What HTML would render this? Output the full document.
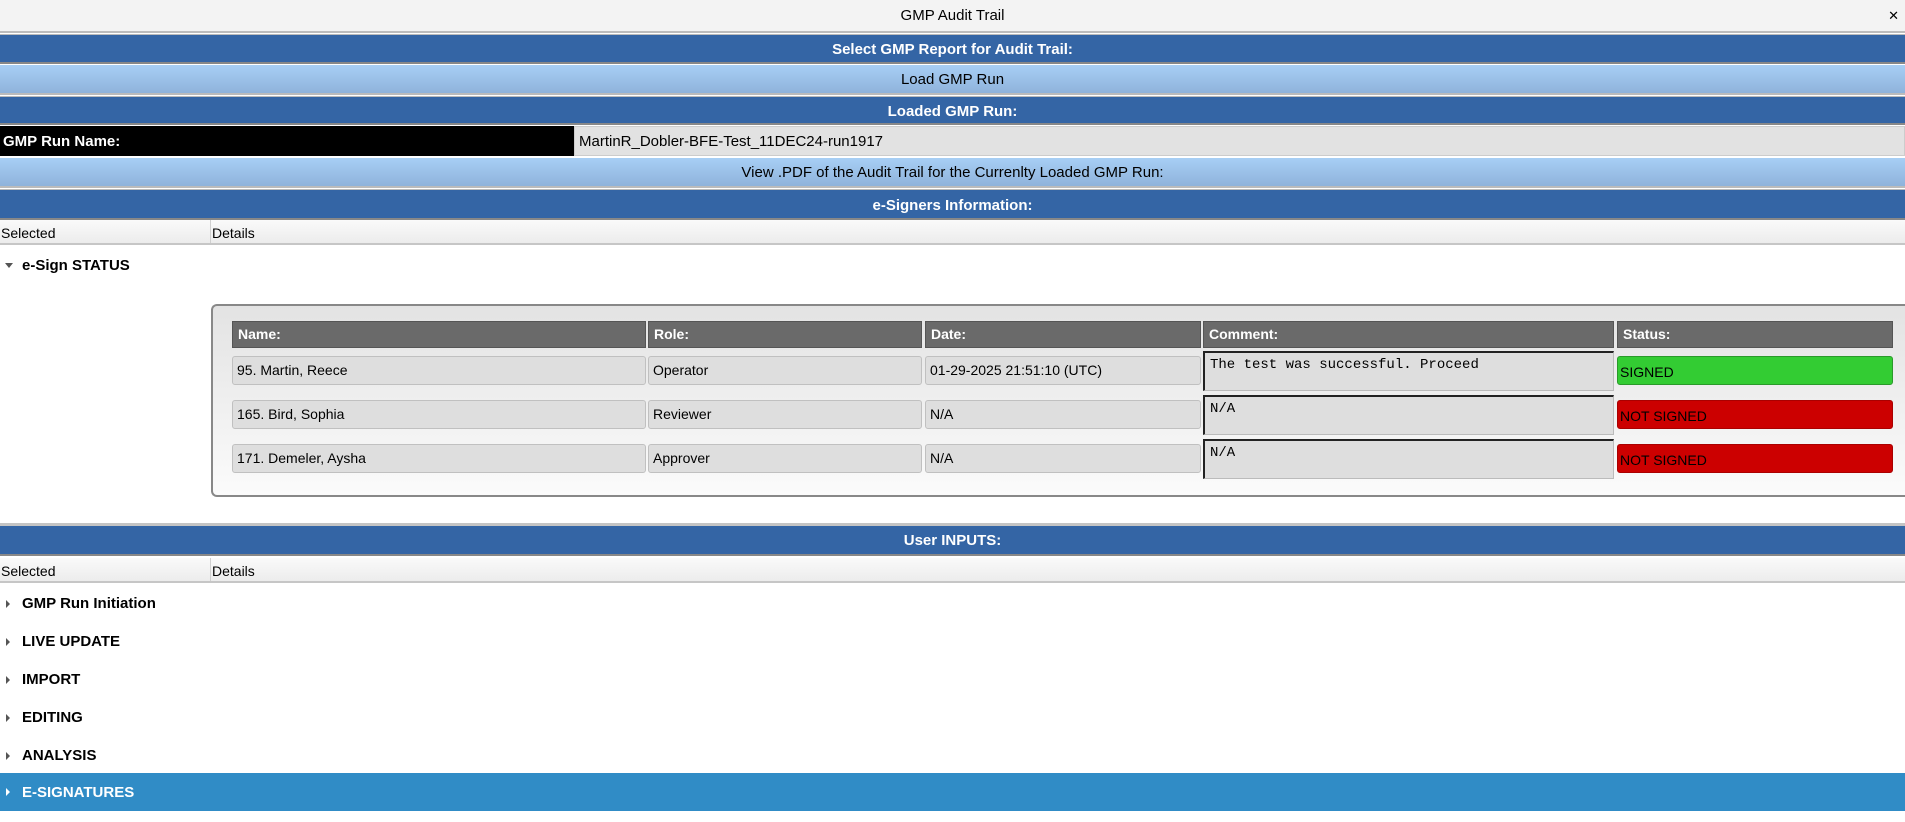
<!DOCTYPE html>
<html><head><meta charset="utf-8"><style>
*{box-sizing:border-box;margin:0;padding:0}
body{width:1905px;height:822px;overflow:hidden;background:#fff;font-family:"Liberation Sans","DejaVu Sans",sans-serif;font-size:15px;color:#000;position:relative}
.a{position:absolute}
.title{left:0;top:0;width:1905px;height:33px;background:#f3f3f3;border-bottom:2px solid #bcbcbc;text-align:center;line-height:31px;font-size:15px}
.close{right:6px;top:0;line-height:31px;font-size:13px}
.band{left:0;width:1905px;background:#3465a5;color:#fff;font-weight:bold;text-align:center;border-bottom:2px solid #888;border-top:1px solid #bbb}
.lb{left:0;width:1905px;background:linear-gradient(#a7cff5,#8fb3db);color:#000;text-align:center;border-bottom:2px solid #bbb}
.hdr{left:0;width:1905px;background:linear-gradient(#fafafa,#ececec);border-bottom:2px solid #c6c6c6;font-size:14px}
.hdr span{position:absolute;top:5px}
.hdr i{position:absolute;left:210px;top:0;bottom:0;border-left:1px solid #d0d0d0}
.row{left:0;width:1905px;font-weight:bold;font-size:15px}
.tri{position:absolute;left:6px;width:0;height:0;border-top:4px solid transparent;border-bottom:4px solid transparent;border-left:4px solid #555}
.th{background:#6a6a6a;color:#fff;font-weight:bold;border:1px solid #555;padding-left:5px;line-height:25px;top:321px;height:27px;font-size:14px}
.cell{background:#dedede;border:1px solid #c0c0c0;border-radius:3px;padding-left:4px;font-size:14px;line-height:27px;height:29px}
.cm{background:#dedede;border:1px solid #bbb;border-top:2px solid #222;border-left:2px solid #222;font-family:"Liberation Mono","DejaVu Sans Mono",monospace;font-size:14px;padding:4px 5px;height:40px}
.st{border-radius:3px;font-size:14px;line-height:30px;height:29px;padding-left:2px}
</style></head><body>
<div class="a title">GMP Audit Trail</div>
<div class="a close">✕</div>
<div class="a band" style="top:34px;height:30px;line-height:30px">Select GMP Report for Audit Trail:</div>
<div class="a lb" style="top:65px;height:30px;line-height:30px">Load GMP Run</div>
<div class="a band" style="top:96px;height:29px;line-height:29px">Loaded GMP Run:</div>
<div class="a" style="left:0;top:126px;width:574px;height:30px;background:#000;color:#fff;font-weight:bold;line-height:31px;padding-left:3px">GMP Run Name:</div>
<div class="a" style="left:574px;top:126px;width:1331px;height:30px;background:#e2e2e2;border:1px solid #ccc;line-height:29px;padding-left:4px">MartinR_Dobler-BFE-Test_11DEC24-run1917</div>
<div class="a lb" style="top:158px;height:30px;line-height:30px">View .PDF of the Audit Trail for the Currenlty Loaded GMP Run:</div>
<div class="a band" style="top:189px;height:31px;line-height:31px">e-Signers Information:</div>
<div class="a hdr" style="top:220px;height:25px"><span style="left:1px">Selected</span><i></i><span style="left:212px">Details</span></div>
<div class="a row" style="top:257px;height:20px"><div class="tri" style="top:6px;border:4px solid transparent;border-top:5px solid #555;border-bottom:0;left:5px"></div><span style="position:absolute;left:22px">e-Sign STATUS</span></div>
<div class="a" style="left:211px;top:304px;width:1700px;height:193px;border:2px solid #888;border-right:none;border-radius:6px 0 0 6px;background:linear-gradient(#e3e3e3,#fbfbfb)"></div>
<div class="a th" style="left:232px;width:414px">Name:</div>
<div class="a th" style="left:648px;width:274px">Role:</div>
<div class="a th" style="left:925px;width:276px">Date:</div>
<div class="a th" style="left:1203px;width:411px">Comment:</div>
<div class="a th" style="left:1617px;width:276px">Status:</div>

<div class="a cell" style="left:232px;top:356px;width:414px">95. Martin, Reece</div>
<div class="a cell" style="left:648px;top:356px;width:274px">Operator</div>
<div class="a cell" style="left:925px;top:356px;width:276px">01-29-2025 21:51:10 (UTC)</div>
<div class="a cm" style="left:1203px;top:351px;width:411px">The test was successful. Proceed</div>
<div class="a st" style="left:1617px;top:356px;width:276px;background:#33cc33;border:1px solid #2a9a2a">SIGNED</div>

<div class="a cell" style="left:232px;top:400px;width:414px">165. Bird, Sophia</div>
<div class="a cell" style="left:648px;top:400px;width:274px">Reviewer</div>
<div class="a cell" style="left:925px;top:400px;width:276px">N/A</div>
<div class="a cm" style="left:1203px;top:395px;width:411px">N/A</div>
<div class="a st" style="left:1617px;top:400px;width:276px;background:#cc0000;border:1px solid #a00">NOT SIGNED</div>

<div class="a cell" style="left:232px;top:444px;width:414px">171. Demeler, Aysha</div>
<div class="a cell" style="left:648px;top:444px;width:274px">Approver</div>
<div class="a cell" style="left:925px;top:444px;width:276px">N/A</div>
<div class="a cm" style="left:1203px;top:439px;width:411px">N/A</div>
<div class="a st" style="left:1617px;top:444px;width:276px;background:#cc0000;border:1px solid #a00">NOT SIGNED</div>

<div class="a" style="left:0;top:523px;width:1905px;height:3px;background:#c4c4c4"></div>
<div class="a band" style="top:526px;height:30px;line-height:30px;border-top:none">User INPUTS:</div>
<div class="a hdr" style="top:558px;height:25px"><span style="left:1px">Selected</span><i></i><span style="left:212px">Details</span></div>
<div class="a row" style="top:595px;height:20px"><div class="tri" style="top:5px"></div><span style="position:absolute;left:22px">GMP Run Initiation</span></div>
<div class="a row" style="top:633px;height:20px"><div class="tri" style="top:5px"></div><span style="position:absolute;left:22px">LIVE UPDATE</span></div>
<div class="a row" style="top:671px;height:20px"><div class="tri" style="top:5px"></div><span style="position:absolute;left:22px">IMPORT</span></div>
<div class="a row" style="top:709px;height:20px"><div class="tri" style="top:5px"></div><span style="position:absolute;left:22px">EDITING</span></div>
<div class="a row" style="top:747px;height:20px"><div class="tri" style="top:5px"></div><span style="position:absolute;left:22px">ANALYSIS</span></div>
<div class="a row" style="top:773px;height:38px;background:#308cc6;color:#fff"><div class="tri" style="top:15px;border-left-color:#fff"></div><span style="position:absolute;left:22px;top:11px">E-SIGNATURES</span></div>
</body></html>
